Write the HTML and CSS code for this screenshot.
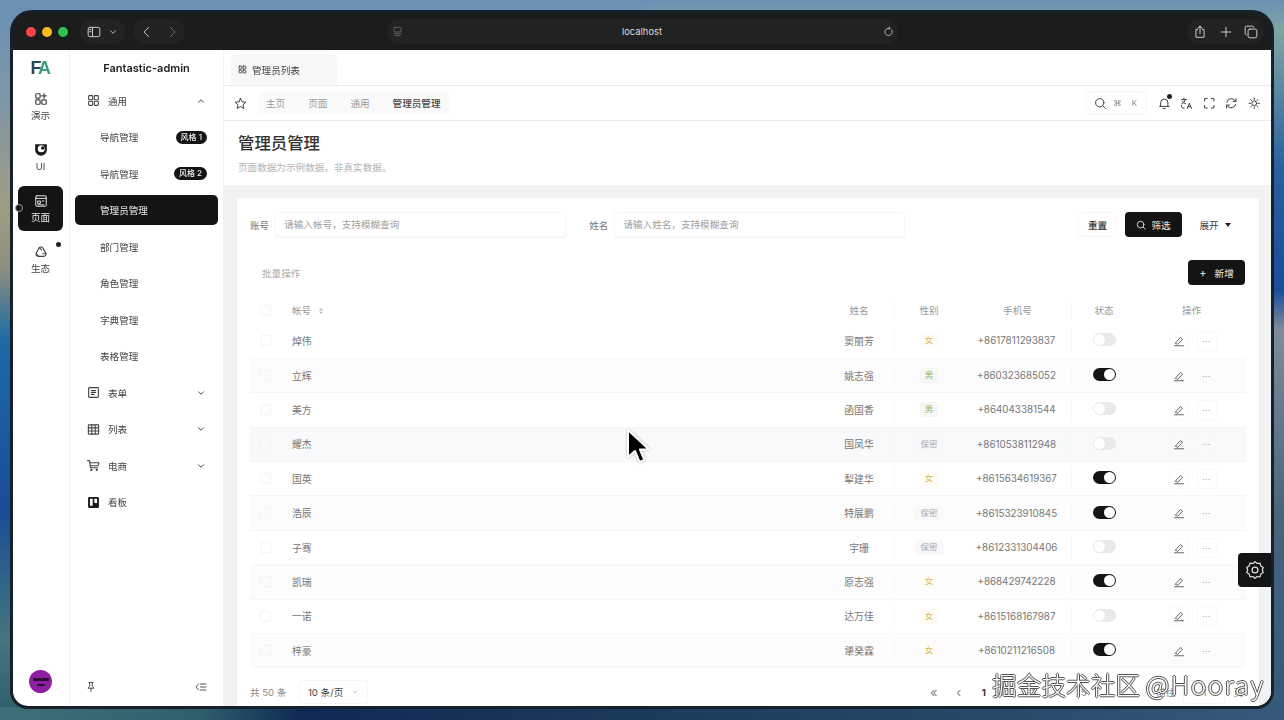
FILE: index.html
```html
<!DOCTYPE html>
<html lang="zh-CN">
<head>
    <meta charset="UTF-8">
    <title>Fantastic-admin</title>
    <link rel="stylesheet" href="styles.css">
</head>
<body>
    <svg class="sprite" xmlns="http://www.w3.org/2000/svg">
        <symbol id="i-grid" viewBox="0 0 24 24"><rect x="3" y="3" width="7.5" height="7.5" rx="1.5"/><rect x="13.5" y="3" width="7.5" height="7.5" rx="1.5"/><rect x="3" y="13.5" width="7.5" height="7.5" rx="1.5"/><rect x="13.5" y="13.5" width="7.5" height="7.5" rx="1.5"/></symbol>
        <symbol id="i-down" viewBox="0 0 24 24"><path d="M6 9l6 6 6-6"/></symbol>
        <symbol id="i-edit" viewBox="0 0 24 24"><path d="M5 16L15 5l4 3.500-9 9.500z"/><path d="M3 21.500h18"/></symbol>
    </svg>

    <div class="window">
        <header class="toolbar">
            <div class="lights"><span class="light red"></span><span class="light yellow"></span><span class="light green"></span></div>
            <div class="pill pill-side">
                <svg class="tool-icon" viewBox="0 0 24 24"><rect x="2" y="4" width="20" height="16" rx="3"/><path d="M9.5 4v16M4.500 8h2.500M4.500 11.500h2.500"/></svg>
                <svg class="tool-chev" viewBox="0 0 24 24"><use href="#i-down"/></svg>
            </div>
            <div class="pill pill-nav">
                <svg class="tool-icon" viewBox="0 0 24 24"><path d="M15 4l-8 8 8 8"/></svg>
                <svg class="tool-icon dim" viewBox="0 0 24 24"><path d="M9 4l8 8-8 8"/></svg>
            </div>
            <div class="pill address">
                <svg class="tool-icon small dim" viewBox="0 0 24 24"><rect x="4" y="3" width="16" height="10" rx="2.500"/><path d="M4 17h16M7 21h10"/></svg>
                <span class="address-text">localhost</span>
                <svg class="tool-icon small" viewBox="0 0 24 24"><path d="M18.500 8a8 8 0 1 1-4-2.800M14.500 2v4h-4"/></svg>
            </div>
            <div class="pill pill-right">
                <svg class="tool-icon" viewBox="0 0 24 24"><path d="M8 8H5v13h14V8h-3M12 15V2M8 5.500L12 2l4 3.500"/></svg>
                <svg class="tool-icon" viewBox="0 0 24 24"><path d="M12 4v16M4 12h16"/></svg>
                <svg class="tool-icon" viewBox="0 0 24 24"><rect x="7" y="7" width="15" height="15" rx="3"/><path d="M17 4a2.500 2.500 0 0 0-2.500-2H5a3 3 0 0 0-3 3v9.500A2.500 2.500 0 0 0 4 17"/></svg>
            </div>
        </header>

        <div class="app">
            <aside class="rail">
                <div class="logo"><span class="logo-f">F</span><span class="logo-a">A</span></div>
                <nav class="rail-nav">
                    <a class="rail-item">
                        <svg class="rail-icon" viewBox="0 0 24 24"><rect x="3" y="3" width="7.500" height="7.500" rx="1.500"/><rect x="3" y="13.500" width="7.500" height="7.500" rx="1.500"/><rect x="13.500" y="13.500" width="7.500" height="7.500" rx="1.500"/><path d="M17.200 2.500v8M13.200 6.500h8"/></svg>
                        <span>演示</span>
                    </a>
                    <a class="rail-item">
                        <svg class="rail-icon" viewBox="0 0 24 24"><path class="solid" d="M2 2h20v10a10 10 0 0 1-20 0z"/><circle class="hole" cx="12.500" cy="10" r="6"/><circle class="solid" cx="15" cy="8.500" r="3"/></svg>
                        <span>UI</span>
                    </a>
                    <a class="rail-item active">
                        <svg class="rail-icon" viewBox="0 0 24 24"><rect x="3" y="3" width="18" height="18" rx="2"/><path d="M3 7.500h18M7 12h4v4H7zM14 12h3M7 18.500h10"/></svg>
                        <span>页面</span>
                        <i class="rail-pointer"></i>
                    </a>
                    <a class="rail-item">
                        <svg class="rail-icon" viewBox="0 0 24 24"><path d="M12 3.500a4 4 0 0 1 3.500 2l4.500 8a4 4 0 0 1-3.500 6h-9A4 4 0 0 1 4 13.500l4.500-8a4 4 0 0 1 3.500-2z"/><path d="M9 4.500l4 4M20 15h-5M4.500 15.500l3.500 4"/></svg>
                        <span>生态</span>
                        <i class="rail-dot"></i>
                    </a>
                </nav>
                <div class="avatar"><i></i><i class="short"></i></div>
            </aside>

            <aside class="menu">
                <div class="brand">Fantastic-admin</div>
                <nav class="menu-list">
                    <a class="menu-item top"><svg class="menu-icon" viewBox="0 0 24 24"><use href="#i-grid"/></svg><span>通用</span><svg class="menu-chev up" viewBox="0 0 24 24"><use href="#i-down"/></svg></a>
                    <a class="menu-item sub"><span>导航管理</span><em class="badge">风格 1</em></a>
                    <a class="menu-item sub"><span>导航管理</span><em class="badge">风格 2</em></a>
                    <a class="menu-item sub current"><span>管理员管理</span></a>
                    <a class="menu-item sub"><span>部门管理</span></a>
                    <a class="menu-item sub"><span>角色管理</span></a>
                    <a class="menu-item sub"><span>字典管理</span></a>
                    <a class="menu-item sub"><span>表格管理</span></a>
                    <a class="menu-item top"><svg class="menu-icon" viewBox="0 0 24 24"><rect x="3" y="3" width="18" height="18" rx="1.500"/><path d="M8 8.500h8M8 12h8M8 15.500h5"/></svg><span>表单</span><svg class="menu-chev" viewBox="0 0 24 24"><use href="#i-down"/></svg></a>
                    <a class="menu-item top"><svg class="menu-icon" viewBox="0 0 24 24"><rect x="2.500" y="3.500" width="19" height="17" rx="1"/><path d="M2.500 9h19M2.500 14.700h19M8.800 3.500v17M15.200 3.500v17"/></svg><span>列表</span><svg class="menu-chev" viewBox="0 0 24 24"><use href="#i-down"/></svg></a>
                    <a class="menu-item top"><svg class="menu-icon" viewBox="0 0 24 24"><path d="M1 3h3.500l2 13h13M5 7h17l-1.500 5.500H6"/><circle cx="8" cy="20" r="1.200"/><circle cx="18" cy="20" r="1.200"/></svg><span>电商</span><svg class="menu-chev" viewBox="0 0 24 24"><use href="#i-down"/></svg></a>
                    <a class="menu-item top"><svg class="menu-icon" viewBox="0 0 24 24"><path class="solid" fill-rule="evenodd" d="M4 2h16a2 2 0 0 1 2 2v16a2 2 0 0 1-2 2H4a2 2 0 0 1-2-2V4a2 2 0 0 1 2-2zm1.500 3v13h5V5zm8 0v8h5V5z"/></svg><span>看板</span></a>
                </nav>
                <div class="menu-foot">
                    <svg class="foot-icon" viewBox="0 0 24 24"><path d="M8 3h8M9.500 3v7L6 14.500h12L14.500 10V3M12 14.500V21"/></svg>
                    <svg class="foot-icon" viewBox="0 0 24 24"><path d="M7 6l-5 6 5 6M11 6h11M11 12h11M11 18h11"/></svg>
                </div>
            </aside>

            <main class="main">
                <div class="tabs">
                    <div class="tab"><svg class="tab-icon" viewBox="0 0 24 24"><use href="#i-grid"/></svg><span>管理员列表</span></div>
                </div>
                <div class="crumbs">
                    <svg class="star" viewBox="0 0 24 24"><path d="M12 2.500l2.900 6.300 6.900.8-5.100 4.700 1.400 6.800-6.100-3.400-6.100 3.400 1.400-6.800-5.100-4.700 6.900-.8z"/></svg>
                    <div class="crumb-list">
                        <span>主页</span><span>页面</span><span>通用</span><span class="crumb-now">管理员管理</span>
                    </div>
                    <div class="tools">
                        <div class="search">
                            <svg class="tool-s" viewBox="0 0 24 24"><circle cx="11" cy="11" r="8"/><path d="M17 17l5 5"/></svg>
                            <kbd>⌘</kbd><kbd>K</kbd>
                        </div>
                        <div class="tool-wrap">
                            <svg class="tool-s" viewBox="0 0 24 24"><path d="M5 18V11a7 7 0 0 1 14 0v7M3 18h18M10 22h4"/></svg>
                            <i class="bell-dot"></i>
                        </div>
                        <svg class="tool-s" viewBox="0 0 24 24"><path d="M3 5h9M7.500 2v3M10 5c-.500 4-3 7-6.500 8M5 8c1 2.500 3 4 6 5M14 22l4-10 4 10M15.500 18.500h5M3 16v2a3 3 0 0 0 3 3h2"/></svg>
                        <svg class="tool-s" viewBox="0 0 24 24"><path d="M3 8V3h5M16 3h5v5M21 16v5h-5M8 21H3v-5"/></svg>
                        <svg class="tool-s" viewBox="0 0 24 24"><path d="M3.500 10A8.800 8.800 0 0 1 19 6.500l2 2M21 3v5.500h-5.500M20.500 14A8.800 8.800 0 0 1 5 17.500l-2-2M3 21v-5.500h5.500"/></svg>
                        <svg class="tool-s" viewBox="0 0 24 24"><circle cx="12" cy="12" r="4.500"/><path d="M12 2v3M12 19v3M2 12h3M19 12h3M5 5l2 2M17 17l2 2M5 19l2-2M17 7l2-2"/></svg>
                    </div>
                </div>
                <section class="page-head">
                    <h1>管理员管理</h1>
                    <p>页面数据为示例数据&#xFF0C;非真实数据。</p>
                </section>
                <section class="card">
                    <form class="filters">
                        <label class="field"><span>账号</span><input class="input" placeholder="请输入帐号&#xFF0C;支持模糊查询"></label>
                        <label class="field"><span>姓名</span><input class="input" placeholder="请输入姓名&#xFF0C;支持模糊查询"></label>
                        <div class="filter-btns">
                            <button type="button" class="btn plain">重置</button>
                            <button type="button" class="btn dark"><svg class="btn-icon" viewBox="0 0 24 24"><circle cx="11" cy="11" r="8"/><path d="M17 17l5 5"/></svg>筛选</button>
                            <button type="button" class="btn ghost">展开<i class="caret"></i></button>
                        </div>
                    </form>
                    <div class="batch">
                        <span>批量操作</span>
                        <button type="button" class="btn dark add"><i class="plus">+</i>新增</button>
                    </div>
                    <table class="grid">
                        <colgroup><col class="c-check"><col><col class="c-name"><col class="c-sex"><col class="c-phone"><col class="c-state"><col class="c-ops"></colgroup>
                        <thead>
                            <tr><th><i class="check"></i></th><th class="left">帐号 <svg class="sort" viewBox="0 0 12 12"><path d="M3 5l3-3 3 3zM3 7l3 3 3-3z"/></svg></th><th>姓名</th><th class="line">性别</th><th>手机号</th><th class="line">状态</th><th>操作</th></tr>
                        </thead>
                        <tbody>
                            <tr><td><i class="check"></i></td><td class="left">焯伟</td><td>窦丽芳</td><td class="line"><b class="tag f">女</b></td><td>+8617811293837</td><td class="line"><i class="switch"></i></td><td><span class="ops"><a class="op"><svg viewBox="0 0 24 24"><use href="#i-edit"/></svg></a><a class="op">···</a></span></td></tr>
                            <tr class="alt"><td><i class="check"></i></td><td class="left">立辉</td><td>姚志强</td><td class="line"><b class="tag m">男</b></td><td>+860323685052</td><td class="line"><i class="switch on"></i></td><td><span class="ops"><a class="op"><svg viewBox="0 0 24 24"><use href="#i-edit"/></svg></a><a class="op">···</a></span></td></tr>
                            <tr><td><i class="check"></i></td><td class="left">美方</td><td>函国香</td><td class="line"><b class="tag m">男</b></td><td>+864043381544</td><td class="line"><i class="switch"></i></td><td><span class="ops"><a class="op"><svg viewBox="0 0 24 24"><use href="#i-edit"/></svg></a><a class="op">···</a></span></td></tr>
                            <tr class="hover"><td><i class="check"></i></td><td class="left">耀杰</td><td>国凤华</td><td class="line"><b class="tag s">保密</b></td><td>+8610538112948</td><td class="line"><i class="switch"></i></td><td><span class="ops"><a class="op"><svg viewBox="0 0 24 24"><use href="#i-edit"/></svg></a><a class="op">···</a></span></td></tr>
                            <tr><td><i class="check"></i></td><td class="left">国英</td><td>犁建华</td><td class="line"><b class="tag f">女</b></td><td>+8615634619367</td><td class="line"><i class="switch on"></i></td><td><span class="ops"><a class="op"><svg viewBox="0 0 24 24"><use href="#i-edit"/></svg></a><a class="op">···</a></span></td></tr>
                            <tr class="alt"><td><i class="check"></i></td><td class="left">浩辰</td><td>特展鹏</td><td class="line"><b class="tag s">保密</b></td><td>+8615323910845</td><td class="line"><i class="switch on"></i></td><td><span class="ops"><a class="op"><svg viewBox="0 0 24 24"><use href="#i-edit"/></svg></a><a class="op">···</a></span></td></tr>
                            <tr><td><i class="check"></i></td><td class="left">子骞</td><td>宇珊</td><td class="line"><b class="tag s">保密</b></td><td>+8612331304406</td><td class="line"><i class="switch"></i></td><td><span class="ops"><a class="op"><svg viewBox="0 0 24 24"><use href="#i-edit"/></svg></a><a class="op">···</a></span></td></tr>
                            <tr class="alt"><td><i class="check"></i></td><td class="left">凯瑞</td><td>原志强</td><td class="line"><b class="tag f">女</b></td><td>+868429742228</td><td class="line"><i class="switch on"></i></td><td><span class="ops"><a class="op"><svg viewBox="0 0 24 24"><use href="#i-edit"/></svg></a><a class="op">···</a></span></td></tr>
                            <tr><td><i class="check"></i></td><td class="left">一诺</td><td>达万佳</td><td class="line"><b class="tag f">女</b></td><td>+8615168167987</td><td class="line"><i class="switch"></i></td><td><span class="ops"><a class="op"><svg viewBox="0 0 24 24"><use href="#i-edit"/></svg></a><a class="op">···</a></span></td></tr>
                            <tr class="alt"><td><i class="check"></i></td><td class="left">梓豪</td><td>犟癸霖</td><td class="line"><b class="tag f">女</b></td><td>+8610211216508</td><td class="line"><i class="switch on"></i></td><td><span class="ops"><a class="op"><svg viewBox="0 0 24 24"><use href="#i-edit"/></svg></a><a class="op">···</a></span></td></tr>
                        </tbody>
                    </table>
                    <div class="pager">
                        <span class="total">共 50 条</span>
                        <div class="size"><span>10 条/页</span><svg viewBox="0 0 24 24"><use href="#i-down"/></svg></div>
                        <div class="pages">
                            <span class="arrow">«</span><span class="arrow">‹</span>
                            <b>1</b><span>2</span><span>3</span><span>4</span><span>5</span>
                        </div>
                        <div class="jump"><span>前往</span><i class="jump-box">1</i><span>页</span></div>
                    </div>
                </section>
            </main>
        </div>

        <a class="settings"><svg viewBox="0 0 24 24"><path d="M12 2l2.600 2.200 3.400-.4 1 3.300 2.900 1.800-1.200 3.100 1.200 3.100-2.900 1.800-1 3.300-3.400-.4L12 22l-2.600-2.200-3.400.4-1-3.300-2.900-1.800L3.300 12 2.100 8.900 5 7.100l1-3.300 3.400.4z"/><circle cx="12" cy="12" r="3.500"/></svg></a>
    </div>

    <svg class="cursor" viewBox="0 0 24 38"><path d="M2 2v27l7-6 4.500 11 5-2-4.500-10.500h9z"/></svg>
    <div class="watermark">掘金技术社区 <span class="watermark-name">@Hooray</span></div>
</body>
</html>
```

FILE: styles.css
```css
* {
    box-sizing: border-box;
    margin: 0;
    padding: 0;
}

html, body {
    height: 100%;
    overflow: hidden;
}

body {
    position: relative;
    padding: 10px;
    font-family: Inter, "Noto Sans CJK SC", sans-serif;
    font-size: 9.6px;
    color: #333;
    background:
        linear-gradient(to right, #3f6f76 0, #2f5f6c 200px, #0e2a55 300px, #1d3d5c 700px, #27496a 1000px, #37597c 1284px) left bottom / 100% 13px no-repeat,
        linear-gradient(to bottom, #6a90b5 0, #7b96a8 90px, #a09c84 210px, #8c8f7f 270px, #1c6aa6 340px, #1a4c96 510px, #44767e 640px, #2e5a68 720px) left top / 50% 100% no-repeat,
        linear-gradient(to bottom, #6a90b5 0, #7fa6a4 30px, #2a5fa0 170px, #1b4d9a 290px, #7f8b99 330px, #47647c 520px, #34597c 720px) right top / 50% 100% no-repeat;
}

.sprite {
    display: none;
}

svg {
    fill: none;
    stroke: currentColor;
    stroke-width: 2;
    stroke-linecap: round;
    stroke-linejoin: round;
    flex: none;
}

a {
    color: inherit;
    text-decoration: none;
}

i, em, b {
    font-style: normal;
}

/* browser window */
.window {
    position: relative;
    height: 699px;
    width: 1264px;
    border: 3px solid #16212b;
    border-radius: 22px 22px 18px 18px;
    background: #1c1c1c;
    overflow: hidden;
    filter: blur(0.4px);
}

.toolbar {
    height: 37px;
    display: flex;
    align-items: center;
    background: #1b1c1c;
    color: #d8d8d8;
}

.lights {
    display: flex;
    gap: 6px;
    margin-left: 13px;
    width: 54px;
}

.light {
    width: 10px;
    height: 10px;
    border-radius: 50%;
}

.red { background: #f8444f; }
.yellow { background: #fbbb1f; }
.green { background: #2fc24e; }

.pill {
    height: 25px;
    border-radius: 13px;
    background: #212222;
    display: flex;
    align-items: center;
}

.pill-side {
    width: 46px;
    padding-left: 7px;
    gap: 7px;
}

.pill-nav {
    width: 52px;
    margin-left: 7px;
    padding-left: 7px;
    gap: 11px;
}

.address {
    width: 511px;
    margin-left: 202px;
    padding: 0 4px 0 5px;
    justify-content: space-between;
}

.address-text {
    flex: 1;
    text-align: center;
    font-size: 9.4px;
    color: #ddd;
    padding-right: 2px;
}

.pill-right {
    width: 77px;
    margin-left: 289px;
    padding: 0 6px;
    justify-content: space-between;
}

.tool-icon {
    width: 14px;
    height: 14px;
    stroke-width: 1.6;
}

.tool-icon.small {
    width: 11px;
    height: 11px;
}

.tool-icon.dim {
    color: #777;
}

.tool-chev {
    width: 10px;
    height: 10px;
}

/* app */
.app {
    display: flex;
    height: 659px;
    background: #fff;
}

.rail {
    width: 57px;
    flex: none;
    display: flex;
    flex-direction: column;
    align-items: center;
    border-right: 1px solid #f0f0f0;
    padding: 8px 1px 0 0;
}

.logo {
    height: 20px;
    font-family: "Liberation Sans", sans-serif;
    font-weight: 700;
    font-size: 18px;
    line-height: 20px;
    letter-spacing: -2.5px;
    padding-right: 2px;
}

.logo-f { color: #27485a; }
.logo-a { color: #3aa07c; }

.rail-nav {
    margin-top: 6px;
    display: flex;
    flex-direction: column;
    gap: 6px;
    width: 45px;
}

.rail-item {
    position: relative;
    height: 45px;
    border-radius: 6px;
    display: flex;
    flex-direction: column;
    align-items: center;
    justify-content: center;
    gap: 4px;
    color: #444;
    line-height: 12px;
}

.rail-item.active {
    background: #141414;
    color: #eee;
}

.rail-icon {
    width: 14px;
    height: 14px;
}

.solid {
    fill: #1a1a1a;
    stroke: none;
}

.hole {
    fill: #fff;
    stroke: none;
}

.rail-item.active .rail-icon {
    stroke-width: 1.6;
}

.rail-pointer {
    position: absolute;
    left: -3px;
    top: 18px;
    width: 8px;
    height: 8px;
    border-radius: 50%;
    background: #141414;
    border: 1px solid #999;
}

.rail-dot {
    position: absolute;
    right: 2px;
    top: 5px;
    width: 5px;
    height: 5px;
    border-radius: 50%;
    background: #222;
}

.avatar {
    margin-top: auto;
    margin-bottom: 16px;
    width: 23px;
    height: 23px;
    border-radius: 50%;
    background: #8e1fa3;
    display: flex;
    flex-direction: column;
    align-items: center;
    justify-content: center;
    gap: 3px;
}

.avatar i {
    width: 16px;
    height: 3px;
    background: #2a1030;
    border-radius: 1px;
}

.avatar i.short {
    width: 8px;
    height: 2px;
}

.menu {
    width: 154px;
    flex: none;
    display: flex;
    flex-direction: column;
    border-right: 1px solid #f2f2f2;
}

.brand {
    height: 35.500px;
    line-height: 36px;
    text-align: center;
    font-size: 11px;
    font-weight: 600;
    color: #222;
}

.menu-list {
    padding: 0 5px;
    display: flex;
    flex-direction: column;
    gap: 6.5px;
}

.menu-item {
    height: 30px;
    display: flex;
    align-items: center;
    border-radius: 5px;
    color: #444;
    padding-right: 11px;
}

.menu-item.top {
    padding-left: 12px;
}

.menu-item.sub {
    padding-left: 25px;
}

.menu-item.current {
    background: #141414;
    color: #eee;
}

.menu-icon {
    width: 13px;
    height: 13px;
    margin-right: 8px;
}

.menu-chev {
    width: 10px;
    height: 10px;
    margin-left: auto;
    margin-right: 1px;
    stroke-width: 2.4;
}

.menu-chev.up {
    transform: rotate(180deg);
}

.badge {
    margin-left: auto;
    height: 13px;
    line-height: 13px;
    padding: 0 5px;
    border-radius: 7px;
    background: #141414;
    color: #eee;
    font-size: 8px;
    font-weight: 500;
}

.menu-foot {
    margin-top: auto;
    padding: 0 16px 16px 15px;
    display: flex;
    justify-content: space-between;
    color: #555;
}

.foot-icon {
    width: 12px;
    height: 12px;
}

/* main column */
.main {
    flex: 1;
    min-width: 0;
    display: flex;
    flex-direction: column;
    background: #f2f2f2;
}

.tabs {
    height: 35px;
    background: #fff;
    padding: 4px 0 0 7px;
}

.tab {
    width: 106px;
    height: 31px;
    background: #f7f7f7;
    border-radius: 6px 6px 0 0;
    display: flex;
    align-items: center;
    gap: 5px;
    padding: 0 0 0 7px;
    color: #444;
}

.tab-icon {
    width: 9px;
    height: 9px;
    stroke-width: 2.4;
}

.crumbs {
    height: 36px;
    background: #fff;
    border-top: 1px solid #ececec;
    border-bottom: 1px solid #ececec;
    display: flex;
    align-items: center;
    padding: 0 11px 0 10px;
}

.star {
    width: 13px;
    height: 13px;
    color: #333;
    stroke-width: 1.7;
}

.crumb-list {
    margin-left: 11px;
    height: 22px;
    width: 192px;
    padding-left: 8px;
    border-radius: 4px;
    background: #fafafa;
    display: flex;
    align-items: center;
    gap: 23px;
    color: #9a9a9a;
}

.crumb-now {
    color: #444;
    font-weight: 500;
}

.tools {
    margin-left: auto;
    display: flex;
    align-items: center;
    gap: 10px;
    color: #333;
}

.search {
    width: 61px;
    height: 24px;
    border-radius: 4px;
    border: 1px solid #f6f6f6;
    display: flex;
    align-items: center;
    gap: 6px;
    padding-left: 7px;
    margin-right: 1px;
}

.search kbd {
    font-family: inherit;
    font-size: 8px;
    color: #888;
    width: 11px;
    text-align: center;
}

.tool-s {
    width: 12.500px;
    height: 12.500px;
    stroke-width: 1.8;
    display: block;
}

.tool-wrap {
    position: relative;
}

.bell-dot {
    position: absolute;
    right: -2px;
    top: -3px;
    width: 5px;
    height: 5px;
    border-radius: 50%;
    background: #222;
}

.page-head {
    height: 64px;
    background: #fff;
    padding: 11px 0 0 14px;
}

.page-head h1 {
    font-size: 16.4px;
    line-height: 22px;
    font-weight: 500;
    color: #333;
}

.page-head p {
    margin-top: 7px;
    line-height: 13px;
    color: #b4b4b4;
}

/* card */
.card {
    flex: 1;
    margin: 13px 12px 0 13px;
    padding: 0 13px;
    background: #fff;
    display: flex;
    flex-direction: column;
    border-radius: 3px 3px 0 0;
}

.filters {
    padding-top: 14px;
    display: flex;
    align-items: center;
}

.field {
    display: flex;
    align-items: center;
    gap: 6px;
    margin-right: 23px;
    color: #777;
}

.input {
    width: 291px;
    height: 25px;
    border: 1px solid #f6f6f6;
    border-radius: 3px;
    padding: 0 8px;
    font: inherit;
    outline: none;
    box-shadow: 0 1px 1px #f6f6f6;
}

.input::placeholder {
    color: #a0a0a0;
}

.filter-btns {
    margin-left: auto;
    display: flex;
    align-items: center;
    gap: 8px;
    padding-right: 6px;
}

.btn {
    height: 25px;
    border-radius: 4px;
    border: 0;
    font: inherit;
    display: flex;
    align-items: center;
    justify-content: center;
    gap: 5px;
    background: #fff;
    color: #333;
}

.btn.plain {
    width: 39px;
    border: 1px solid #f6f6f6;
    font-weight: 500;
}

.btn.dark {
    width: 57px;
    background: #141414;
    color: #eee;
}

.btn.ghost {
    width: 50px;
    color: #444;
    gap: 6px;
}

.btn-icon {
    width: 10px;
    height: 10px;
}

.caret {
    border: 3px solid transparent;
    border-top: 4px solid #222;
    border-bottom: 0;
}

.batch {
    margin-top: 23px;
    height: 25px;
    display: flex;
    align-items: center;
    justify-content: space-between;
    padding: 0 1px 0 12px;
    color: #aaa;
}

.plus {
    font-size: 11px;
    margin-right: 3px;
}

/* table */
.grid {
    margin-top: 11px;
    width: 100%;
    table-layout: fixed;
    border-collapse: collapse;
    color: #777;
}

.c-check { width: 30px; }
.c-name { width: 70px; }
.c-sex { width: 70px; }
.c-phone { width: 107px; }
.c-state { width: 66px; }
.c-ops { width: 109px; }

.grid th {
    height: 28px;
    font-weight: 400;
    color: #999;
    text-align: center;
}

.grid td {
    height: 34.400px;
    text-align: center;
    font-size: 9.800px;
}

.grid td:nth-child(5) {
    padding-right: 2px;
}

.grid .left {
    text-align: left;
    padding-left: 12px;
}

.grid .line {
    position: relative;
}

.grid .line::before {
    content: "";
    position: absolute;
    left: 0;
    top: 5px;
    bottom: 5px;
    border-left: 1px solid #f7f7f7;
}

.grid tbody tr {
    border-bottom: 1px solid #f6f6f6;
}

.grid tr.alt {
    background: #fcfcfc;
}

.grid tr.hover {
    background: #f7f9fb;
}

.sort {
    width: 8px;
    height: 8px;
    fill: #aaa;
    stroke: none;
    margin-left: 3px;
    vertical-align: -1px;
}

.check {
    display: block;
    margin: 0 auto;
    width: 11px;
    height: 11px;
    border: 1px solid #f4f4f4;
    border-radius: 2px;
}

.tag {
    display: inline-block;
    min-width: 18px;
    height: 15px;
    line-height: 15px;
    padding: 0 4px;
    border-radius: 2px;
    font-size: 8.500px;
    font-weight: 400;
}

.tag.f { color: #dcbc55; background: #fefcf5; }
.tag.m { color: #88b85a; background: #f6f6f6; }
.tag.s { color: #aaa; background: #f8f8f8; padding: 0 5px; }

.switch {
    display: block;
    margin: -1px auto 1px;
    position: relative;
    width: 23px;
    height: 13px;
    border-radius: 7px;
    background: #e9e9e9;
}

.switch::after {
    content: "";
    position: absolute;
    left: 1px;
    top: 1px;
    width: 11px;
    height: 11px;
    border-radius: 50%;
    background: #fff;
}

.switch.on {
    background: #141414;
}

.switch.on::after {
    left: 11px;
}

.ops {
    display: flex;
    justify-content: center;
    gap: 8px;
    padding-left: 2px;
}

.op {
    width: 20px;
    height: 20px;
    border: 1px solid #f9f9f9;
    border-radius: 3px;
    display: flex;
    align-items: center;
    justify-content: center;
    color: #888;
    font-size: 8px;
    letter-spacing: 0.5px;
}

.op svg {
    width: 12px;
    height: 12px;
    color: #666;
}

/* pager */
.pager {
    margin-top: 11px;
    height: 26px;
    display: flex;
    align-items: center;
    color: #888;
}

.size {
    margin-left: 12.500px;
    width: 69px;
    height: 24px;
    border: 1px solid #f6f6f6;
    border-radius: 3px;
    padding: 0 8px;
    display: flex;
    align-items: center;
    justify-content: space-between;
    color: #444;
}

.size svg {
    width: 8px;
    height: 8px;
    color: #aaa;
}

.pages {
    margin-left: auto;
    display: flex;
    align-items: center;
    color: #888;
}

.pages > * {
    width: 25px;
    text-align: center;
}

.pages b {
    color: #333;
}

.arrow {
    font-size: 13px;
    line-height: 13px;
}

.jump {
    margin-left: 60px;
    display: flex;
    align-items: center;
    gap: 8px;
    padding-right: 3px;
}

.jump-box {
    width: 42px;
    height: 24px;
    line-height: 24px;
    text-align: center;
    border: 1px solid #f6f6f6;
    border-radius: 3px;
}

/* floating bits */
.settings {
    position: absolute;
    right: 0;
    top: 540px;
    width: 33px;
    height: 34px;
    background: #141414;
    border-radius: 4px 0 0 4px;
    display: flex;
    align-items: center;
    justify-content: center;
    color: #ddd;
}

.settings svg {
    width: 20px;
    height: 20px;
    stroke-width: 1.500;
}

.cursor {
    position: absolute;
    left: 626px;
    top: 428px;
    width: 24px;
    height: 38px;
    fill: #000;
    stroke: #fff;
    stroke-width: 2;
    filter: drop-shadow(0 0 1px rgba(0, 0, 0, 0.3));
}

.watermark {
    position: absolute;
    left: 992px;
    top: 666px;
    font-family: "Noto Sans CJK SC", sans-serif;
    font-size: 24.700px;
    line-height: 36px;
    font-weight: 300;
    white-space: nowrap;
    color: #fff;
    text-shadow: 1px 0 0 #555, -1px 0 0 #555, 0 1px 0 #555, 0 -1px 0 #555;
}

.watermark-name {
    font-size: 26px;
    letter-spacing: 1.500px;
}
```
